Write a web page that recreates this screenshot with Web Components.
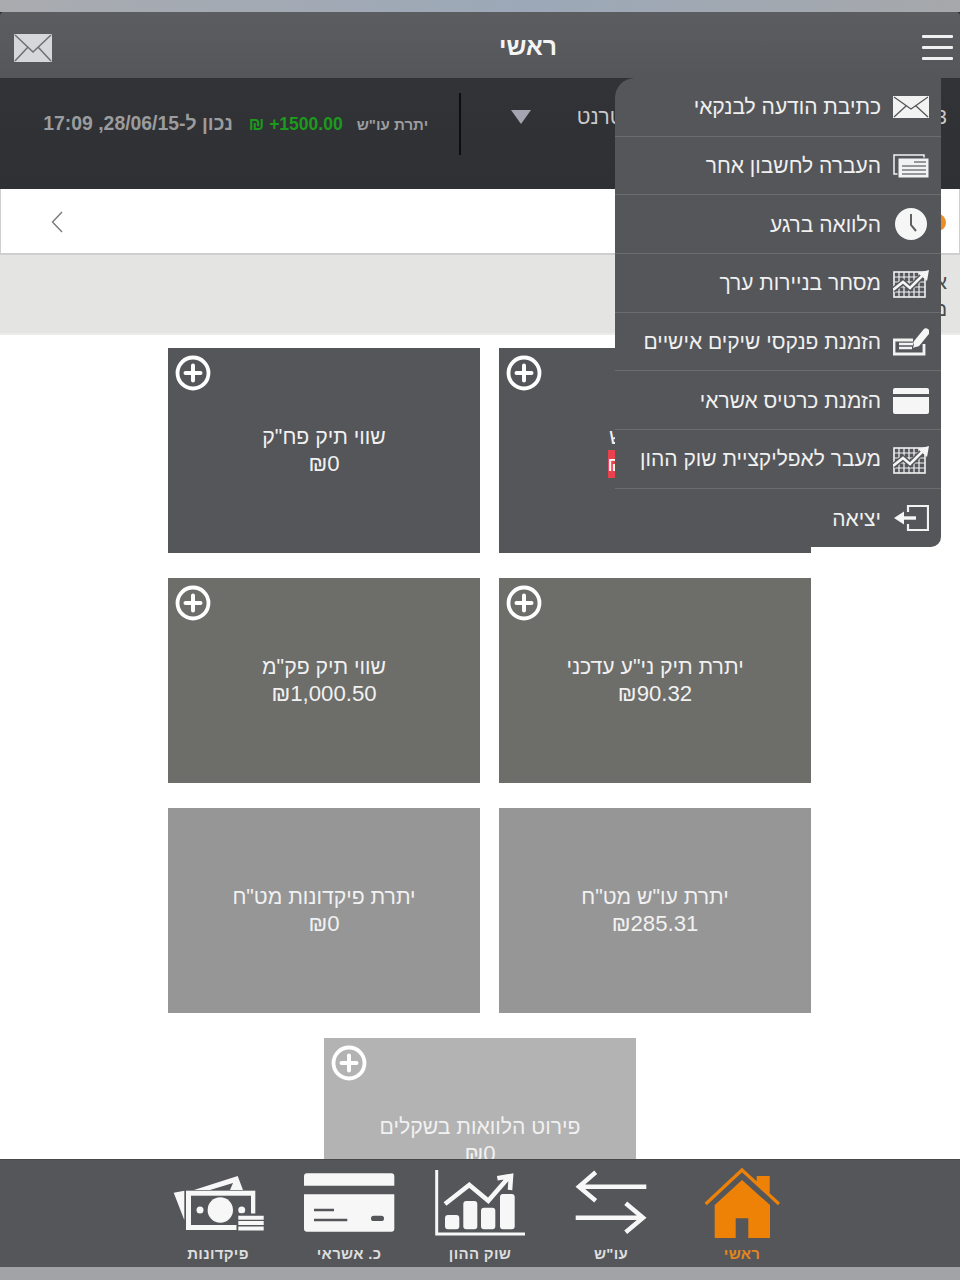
<!DOCTYPE html>
<html lang="he" dir="rtl">
<head>
<meta charset="utf-8">
<title>ראשי</title>
<style>
html, body { height: 100%; }
body {
    margin: 0;
    position: relative;
    overflow: hidden;
    display: flex;
    flex-direction: column;
    background: #a2a4a7;
    font-family: "Liberation Sans", "Noto Sans", sans-serif;
}
</style>
</head>
<body>
<status-strip></status-strip>
<app-header>ראשי</app-header>
<balance-bar channel="אינטרנט" account="3" label='יתרת עו"ש' amount="₪ +1500.00" updated="נכון ל-28/06/15, 17:09"></balance-bar>
<notice-bar></notice-bar>
<message-band><div>א</div><div>ם</div></message-band>

<tile-grid>
    <summary-tile tone="t1" plus>
        <span slot="label">יתרת עו"ש</span>
        <span slot="amount" style="display:inline-block;background:#e8434c;color:#fff;font-size:20px;line-height:28px">₪1,500.00</span>
    </summary-tile>
    <summary-tile tone="t1" plus>
        <span slot="label">שווי תיק פח"ק</span>
        <span slot="amount">₪0</span>
    </summary-tile>
    <summary-tile tone="t2" plus>
        <span slot="label">יתרת תיק ני"ע עדכני</span>
        <span slot="amount">₪90.32</span>
    </summary-tile>
    <summary-tile tone="t2" plus>
        <span slot="label">שווי תיק פק"מ</span>
        <span slot="amount">₪1,000.50</span>
    </summary-tile>
    <summary-tile tone="t3">
        <span slot="label">יתרת עו"ש מט"ח</span>
        <span slot="amount">₪285.31</span>
    </summary-tile>
    <summary-tile tone="t3">
        <span slot="label">יתרת פיקדונות מט"ח</span>
        <span slot="amount">₪0</span>
    </summary-tile>
    <summary-tile tone="t4" plus wide>
        <span slot="label">פירוט הלוואות בשקלים</span>
        <span slot="amount">₪0</span>
    </summary-tile>
</tile-grid>

<tab-bar>
    <tab-item icon="home" active>ראשי</tab-item>
    <tab-item icon="arrows">עו"ש</tab-item>
    <tab-item icon="chart">שוק ההון</tab-item>
    <tab-item icon="card">כ. אשראי</tab-item>
    <tab-item icon="money">פיקדונות</tab-item>
</tab-bar>
<status-strip bottom></status-strip>

<popup-menu>
    <menu-row icon="mail">כתיבת הודעה לבנקאי</menu-row>
    <menu-row icon="sheet">העברה לחשבון אחר</menu-row>
    <menu-row icon="clock">הלוואה ברגע</menu-row>
    <menu-row icon="grid">מסחר בניירות ערך</menu-row>
    <menu-row icon="check">הזמנת פנקסי שיקים אישיים</menu-row>
    <menu-row icon="creditcard">הזמנת כרטיס אשראי</menu-row>
    <menu-row icon="grid">מעבר לאפליקציית שוק ההון</menu-row>
    <menu-row icon="exit">יציאה</menu-row>
</popup-menu>

<script>
const BG = '#55565a';

const gridIcon = `
<svg width="36" height="30" viewBox="0 0 36 30">
  <g fill="none" stroke="#f2f2f2" stroke-width="1.2">
    <rect x="1" y="4" width="31" height="25" stroke-width="1.6"/>
    <path d="M6 4V29M11 4V29M16 4V29M21 4V29M26 4V29M1 9H32M1 14H32M1 19H32M1 24H32"/>
  </g>
  <path d="M0 22L10 14L17 20L31 6" fill="none" stroke="${BG}" stroke-width="5.5"/>
  <path d="M0 22L10 14L17 20L31 6" fill="none" stroke="#f6f6f6" stroke-width="2.6"/>
  <path d="M36 2L34 13L25 5Z" fill="#f6f6f6"/>
</svg>`;

const menuIcons = {
    mail: `
<svg width="36" height="30" viewBox="0 0 36 30">
  <rect y="4" width="36" height="22" fill="#f2f2f2"/>
  <path d="M1 5L18 17L35 5M1 25L13 14M35 25L23 14" fill="none" stroke="${BG}" stroke-width="1.3"/>
</svg>`,
    sheet: `
<svg width="36" height="30" viewBox="0 0 36 30">
  <rect x="1" y="4" width="30" height="19" fill="none" stroke="#f2f2f2" stroke-width="1.5"/>
  <rect x="5" y="7" width="31" height="20" fill="#f2f2f2" stroke="${BG}" stroke-width="1"/>
  <path d="M21 11H33M9 15H33M9 19H33M9 23H33" stroke="#77797d" stroke-width="1.3"/>
</svg>`,
    clock: `
<svg width="36" height="32" viewBox="0 0 36 32">
  <circle cx="18" cy="16" r="16" fill="#f6f6f6"/>
  <path d="M18 6V17L23 23" fill="none" stroke="#5f6165" stroke-width="2"/>
</svg>`,
    grid: gridIcon,
    check: `
<svg width="36" height="30" viewBox="0 0 36 30">
  <path d="M20 13H1V27H31V17" fill="none" stroke="#f2f2f2" stroke-width="2.8"/>
  <path d="M6 17H20M6 21H19" stroke="#f2f2f2" stroke-width="2.4"/>
  <path d="M24 16L33 5" stroke="#f6f6f6" stroke-width="7" stroke-linecap="round"/>
  <path d="M20 21L22 14L27 18Z" fill="#f6f6f6"/>
</svg>`,
    creditcard: `
<svg width="36" height="30" viewBox="0 0 36 30">
  <path d="M2 3H34A2 2 0 0 1 36 5V9H0V5A2 2 0 0 1 2 3Z" fill="#f6f6f6"/>
  <path d="M0 12H36V27A2 2 0 0 1 34 29H2A2 2 0 0 1 0 27Z" fill="#f6f6f6"/>
</svg>`,
    exit: `
<svg width="36" height="30" viewBox="0 0 36 30">
  <path d="M15 9V3H35V27H15V21" fill="none" stroke="#f2f2f2" stroke-width="2.2"/>
  <path d="M1 15L11 8.5V21.5Z" fill="#f6f6f6"/>
  <path d="M10 15H23" stroke="#f6f6f6" stroke-width="3.4"/>
</svg>`
};

const tabIcons = {
    home: `
<svg width="100" height="74" viewBox="-12 0 100 74">
  <path d="M52.7 11H65.7V29L52.7 18Z" fill="currentColor"/>
  <path d="M38 15L66 40V73H44.3V53.3H31.7V73H10.7V40Z" fill="currentColor"/>
  <path d="M1.7 39L38 5L75 39" fill="none" stroke="currentColor" stroke-width="3.2"/>
</svg>`,
    arrows: `
<svg width="100" height="74" viewBox="-12 0 100 74">
  <g fill="none" stroke="currentColor" stroke-width="4.5">
    <path d="M7 21.7H73.3M22.7 7.3L6 21.7L22.7 35.7"/>
    <path d="M2.7 52.7H70M52.7 38.3L70 52.7L52.7 67.3"/>
  </g>
</svg>`,
    chart: `
<svg width="100" height="74" viewBox="0 0 100 74">
  <path d="M6.7 5V69H95" fill="none" stroke="currentColor" stroke-width="3"/>
  <g fill="currentColor">
    <rect x="15" y="50" width="14.3" height="14.3" rx="3"/>
    <rect x="33.3" y="36" width="14" height="28.3" rx="3"/>
    <rect x="51" y="42.7" width="14.3" height="21.6" rx="3"/>
    <rect x="70" y="29" width="14.7" height="35.3" rx="3"/>
  </g>
  <path d="M15 39L39.3 20L58.3 35.7L79 12M67.3 13.3L81 11L80 25" fill="none" stroke="currentColor" stroke-width="4.6"/>
</svg>`,
    card: `
<svg width="100" height="74" viewBox="0 0 100 74">
  <path d="M8 8.3H92.3A3 3 0 0 1 95.3 11.3V20.7H5V11.3A3 3 0 0 1 8 8.3Z" fill="currentColor"/>
  <path d="M5 29.3H95.3V63.7A3 3 0 0 1 92.3 66.7H8A3 3 0 0 1 5 63.7Z" fill="currentColor"/>
  <path d="M15 45H35M15 55H48.3" stroke="${BG}" stroke-width="2.4"/>
  <rect x="72" y="50.7" width="13" height="5.4" rx="2.7" fill="${BG}"/>
</svg>`,
    money: `
<svg width="100" height="74" viewBox="0 0 100 74">
  <g fill="currentColor">
    <path d="M5.7 27.7L16.3 25.7V55Z"/>
    <path d="M26 25L69.7 11L75 25H62L65 18L42 25Z"/>
    <rect x="18" y="25.7" width="69.3" height="39.3"/>
  </g>
  <rect x="23" y="30.7" width="60" height="29.3" fill="${BG}"/>
  <circle cx="52.3" cy="45" r="12.7" fill="currentColor"/>
  <circle cx="32" cy="45" r="3.5" fill="currentColor"/>
  <circle cx="73.7" cy="45" r="3.5" fill="currentColor"/>
  <rect x="68.5" y="48.5" width="29" height="18.5" fill="${BG}"/>
  <path d="M70.3 52.8H95.7M70.3 58H95.7M70.3 63.4H95.7" stroke="currentColor" stroke-width="4"/>
</svg>`
};

// top and bottom device strips
class StatusStrip extends HTMLElement {
    constructor() {
        super();
        const root = this.attachShadow({mode: 'open'});
        root.innerHTML = `
<style>
:host { display: block; height: 12px; flex: none; background: linear-gradient(90deg, #a9abaf, #9ca8b8 55%, #a6a8ab); }
:host([bottom]) { height: 13px; background: #a1a3a6; }
</style>`;
    }
}

class AppHeader extends HTMLElement {
    constructor() {
        super();
        const root = this.attachShadow({mode: 'open'});
        root.innerHTML = `
<style>
:host { display: block; flex: none; background: #2a2a2c; }
.bar {
    height: 66px;
    box-sizing: border-box;
    border-radius: 4px 4px 0 0;
    background: linear-gradient(#5b5d61, #55565a);
    display: flex;
    align-items: center;
    padding: 5px 7px 0 14px;
}
.title { flex: 1; text-align: center; padding-left: 82px; padding-bottom: 1px; color: #f4f4f4; font-size: 24.7px; font-weight: bold; }
.burger { display: flex; flex-direction: column; gap: 7.5px; width: 31px; }
.burger i { display: block; height: 3.5px; border-radius: 1px; background: #f0f0f0; }
svg { display: block; }
</style>
<div class="bar">
  <div class="burger"><i></i><i></i><i></i></div>
  <div class="title"><slot></slot></div>
  <svg width="38" height="28" viewBox="0 0 38 28">
    <rect width="38" height="28" rx="1" fill="#d6d7da"/>
    <path d="M1 1L19 18L37 1M1 27L14 13M37 27L24 13" fill="none" stroke="#6d6f73" stroke-width="1.5"/>
  </svg>
</div>`;
    }
}

class BalanceBar extends HTMLElement {
    static get observedAttributes() {
        return ['channel', 'account', 'label', 'amount', 'updated'];
    }

    constructor() {
        super();
        const root = this.attachShadow({mode: 'open'});
        root.innerHTML = `
<style>
:host { display: block; flex: none; }
.bar {
    height: 111px;
    box-sizing: border-box;
    background: linear-gradient(#323337, #2f3033);
    display: flex;
    align-items: center;
    padding: 0 13px 19px 0;
    color: #c9cacc;
}
.account, .channel { font-size: 21px; padding-bottom: 14px; }
.channel { margin-right: 285px; }
.arrow {
    width: 0; height: 0;
    margin: 0 46px 14px 0;
    border-left: 10px solid transparent;
    border-right: 10px solid transparent;
    border-top: 14px solid #a3a6b2;
}
.divider { width: 2px; height: 62px; background: #0d0d0e; margin-right: 50px; }
.left { display: flex; align-items: center; margin-right: 30.5px; color: #9b9c9e; font-weight: bold; }
.label { font-size: 15.1px; }
.amount { direction: ltr; color: #1c9a1c; font-size: 17.5px; margin-right: 14px; }
.updated { margin-right: 16px; padding-bottom: 2px; font-size: 19.4px; white-space: nowrap; }
</style>
<div class="bar">
  <span class="account"></span>
  <span class="channel"></span>
  <span class="arrow"></span>
  <span class="divider"></span>
  <div class="left">
    <span class="label"></span>
    <span class="amount"></span>
    <span class="updated"></span>
  </div>
</div>`;
    }

    attributeChangedCallback(attrName, oldVal, newVal) {
        this.shadowRoot.querySelector('.' + attrName).textContent = newVal;
    }
}

class NoticeBar extends HTMLElement {
    constructor() {
        super();
        const root = this.attachShadow({mode: 'open'});
        root.innerHTML = `
<style>
:host {
    display: flex;
    flex: none;
    height: 66px;
    box-sizing: border-box;
    align-items: center;
    justify-content: space-between;
    background: #fff;
    border: 1px solid #cfcfcf;
    border-top: 0;
    border-bottom-width: 2px;
    padding: 2px 13px 0 49px;
}
i { display: block; width: 16px; height: 17px; border-radius: 50%; background: #ee8c25; }
svg { display: block; }
</style>
<i></i>
<svg width="14" height="22" viewBox="0 0 14 22"><path d="M12 1L2.5 11L12 21" fill="none" stroke="#77797b" stroke-width="1.4"/></svg>`;
    }
}

class MessageBand extends HTMLElement {
    constructor() {
        super();
        const root = this.attachShadow({mode: 'open'});
        root.innerHTML = `
<style>
:host {
    display: block;
    flex: none;
    height: 80px;
    box-sizing: border-box;
    background: #e4e4e2;
    border-bottom: 2px solid #ececea;
    padding: 14px 13px 0 0;
    color: #4a4a4a;
    font-size: 20px;
    line-height: 27px;
}
</style>
<slot></slot>`;
    }
}

class TileGrid extends HTMLElement {
    constructor() {
        super();
        const root = this.attachShadow({mode: 'open'});
        root.innerHTML = `
<style>
:host {
    display: grid;
    flex: 1;
    min-height: 0;
    overflow: hidden;
    background: #fff;
    grid-template-columns: 312px 312px;
    grid-auto-rows: 205px;
    gap: 25px 19px;
    align-content: start;
    padding: 13px 149px 0 0;
}
</style>
<slot></slot>`;
    }
}

class SummaryTile extends HTMLElement {
    connectedCallback() {
        if (this.shadowRoot) return;
        const root = this.attachShadow({mode: 'open'});
        const plus = this.hasAttribute('plus') ? `
<svg class="plus" width="36" height="36" viewBox="0 0 36 36">
  <circle cx="18" cy="18" r="15.5" fill="none" stroke="#fff" stroke-width="3.8"/>
  <path d="M18 10.5V25.5M10.5 18H25.5" stroke="#fff" stroke-width="4" stroke-linecap="round"/>
</svg>` : '';
        root.innerHTML = `
<style>
:host {
    display: flex;
    flex-direction: column;
    align-items: center;
    position: relative;
    box-sizing: border-box;
    padding-top: 75px;
    color: #f1f1f1;
    font-size: 21.2px;
    line-height: 27px;
    text-align: center;
}
:host([tone="t1"]) { background: #55565a; }
:host([tone="t2"]) { background: #6d6d6a; }
:host([tone="t3"]) { background: #969696; }
:host([tone="t4"]) { background: #b3b3b3; }
:host([wide]) { grid-column: span 2; width: 312px; margin-right: 175px; }
.plus { position: absolute; top: 7px; left: 6.5px; }
slot[name="amount"] { font-size: 22.2px; }
</style>
${plus}
<slot name="label"></slot>
<slot name="amount"></slot>`;
    }
}

class TabBar extends HTMLElement {
    constructor() {
        super();
        const root = this.attachShadow({mode: 'open'});
        root.innerHTML = `
<style>
:host {
    display: flex;
    flex: none;
    justify-content: center;
    height: 108px;
    box-sizing: border-box;
    background: ${BG};
    border-top: 1px solid #47484b;
    padding: 5px 0 0 0;
}
</style>
<slot></slot>`;
    }
}

class TabItem extends HTMLElement {
    connectedCallback() {
        if (this.shadowRoot) return;
        const root = this.attachShadow({mode: 'open'});
        root.innerHTML = `
<style>
:host {
    display: flex;
    flex-direction: column;
    align-items: center;
    width: 131px;
    color: #f7f7f7;
    font-size: 15px;
    font-weight: bold;
}
:host([active]) { color: #ee8207; }
svg { display: block; }
span { margin-top: 6px; color: #dedede; letter-spacing: .3px; }
:host([active]) span { color: #e2861c; }
</style>
${tabIcons[this.getAttribute('icon')]}
<span><slot></slot></span>`;
    }
}

class PopupMenu extends HTMLElement {
    constructor() {
        super();
        const root = this.attachShadow({mode: 'open'});
        root.innerHTML = `
<style>
:host {
    position: absolute;
    top: 78px;
    left: 615px;
    width: 326px;
    height: 469px;
    display: grid;
    grid-template-rows: repeat(8, 58.7px);
    background: ${BG};
    border-radius: 20px 0 10px 0;
    overflow: hidden;
}
</style>
<slot></slot>`;
    }
}

class MenuRow extends HTMLElement {
    connectedCallback() {
        if (this.shadowRoot) return;
        const root = this.attachShadow({mode: 'open'});
        root.innerHTML = `
<style>
:host {
    display: flex;
    align-items: center;
    gap: 12px;
    padding-right: 12px;
    color: #f0f0f0;
    font-size: 21px;
    white-space: nowrap;
    border-bottom: 1px solid #6a6d71;
}
:host(:last-child) { border-bottom: 0; }
svg { display: block; flex: none; }
span { padding-top: 1px; }
</style>
${menuIcons[this.getAttribute('icon')]}
<span><slot></slot></span>`;
    }
}

customElements.define('status-strip', StatusStrip);
customElements.define('app-header', AppHeader);
customElements.define('balance-bar', BalanceBar);
customElements.define('notice-bar', NoticeBar);
customElements.define('message-band', MessageBand);
customElements.define('tile-grid', TileGrid);
customElements.define('summary-tile', SummaryTile);
customElements.define('tab-bar', TabBar);
customElements.define('tab-item', TabItem);
customElements.define('popup-menu', PopupMenu);
customElements.define('menu-row', MenuRow);
</script>
</body>
</html>
